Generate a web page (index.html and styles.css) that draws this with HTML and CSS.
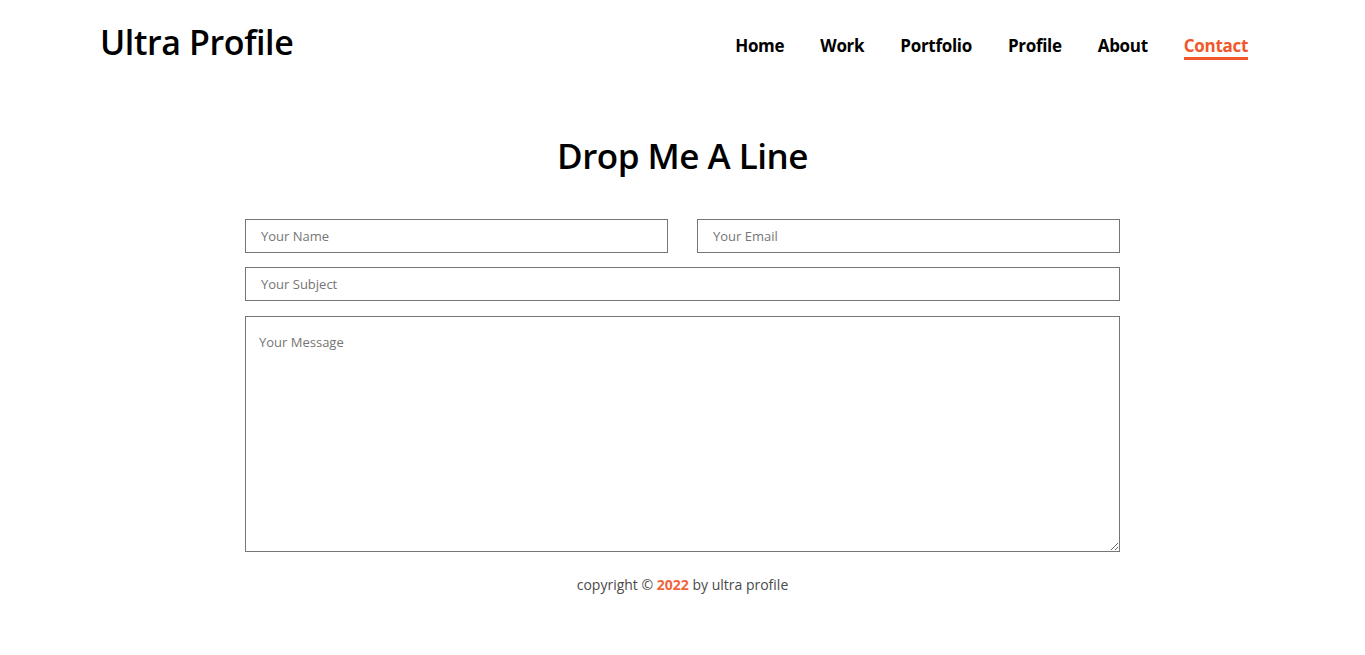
FILE: index.html
```
<!DOCTYPE html>
<html lang="en">
<head>
<meta charset="utf-8">
<title>Ultra Profile - Contact</title>
<link rel="stylesheet" href="styles.css">
</head>
<body>
<header class="header">
  <div class="logo">Ultra Profile</div>
  <nav class="nav">
    <a href="#" class="nav-link">Home</a>
    <a href="#" class="nav-link">Work</a>
    <a href="#" class="nav-link">Portfolio</a>
    <a href="#" class="nav-link">Profile</a>
    <a href="#" class="nav-link">About</a>
    <a href="#" class="nav-link active">Contact</a>
  </nav>
</header>
<main class="contact">
  <h1 class="title">Drop Me A Line</h1>
  <form class="form">
    <div class="row">
      <input class="field" type="text" placeholder="Your Name">
      <input class="field" type="email" placeholder="Your Email">
    </div>
    <input class="field" type="text" placeholder="Your Subject">
    <textarea class="field message" placeholder="Your Message"></textarea>
  </form>
  <p class="footer">copyright © <b class="year">2022</b> by ultra profile</p>
</main>
</body>
</html>
```
FILE: styles.css
```
* { box-sizing: border-box; }
body {
  margin: 0;
  font-family: "Open Sans", "Noto Sans", sans-serif;
  color: #000;
  background: #fff;
}
.header {
  display: flex;
  justify-content: space-between;
  align-items: center;
  padding: 21px 117px 0 100px;
  height: 73px;
}
.logo {
  font-size: 34px;
  font-weight: 600;
  letter-spacing: -0.4px;
  line-height: 48px;
  margin-top: -10px;
}
.nav {
  display: flex;
  gap: 36px;
  align-items: center;
}
.nav-link {
  color: #000;
  text-decoration: none;
  font-weight: 700;
  font-size: 17px;
  letter-spacing: -0.3px;
  line-height: 23px;
  padding-bottom: 0;
  border-bottom: 3px solid transparent;
}
.nav-link.active {
  color: #f0572a;
  border-bottom-color: #f0572a;
}
.contact {
  width: 875px;
  margin: 0 auto;
}
.title {
  text-align: center;
  font-size: 35px;
  font-weight: 600;
  letter-spacing: -0.5px;
  line-height: 48px;
  margin: 59px 0 39px;
}
.form {
  display: flex;
  flex-direction: column;
  gap: 14px;
}
.row {
  display: flex;
  gap: 29px;
}
.row .field { flex: 1; }
.field {
  height: 34px;
  border: 1px solid #767676;
  border-radius: 0;
  padding: 0 15px;
  font-family: "Open Sans", "Noto Sans", sans-serif;
  font-size: 13px;
  color: #333;
  outline: none;
  width: 100%;
}
.field::placeholder { color: #757575; }
.message {
  height: 236px;
  margin-top: 1px;
  padding: 16px 13px;
  resize: vertical;
}
.footer {
  text-align: center;
  font-size: 14px;
  color: #4a4a4a;
  margin: 23px 0 0;
}
.year {
  color: #f0643c;
  font-weight: 700;
}
```
